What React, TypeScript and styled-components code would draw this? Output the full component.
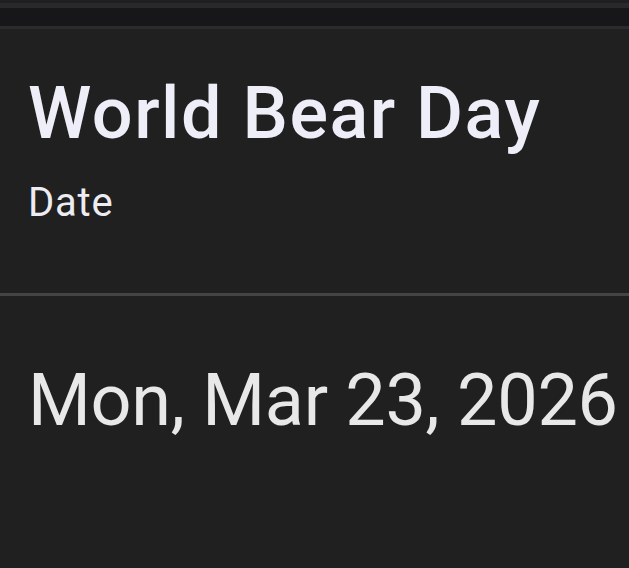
import { createGlobalStyle, styled } from "styled-components";

const GlobalStyle = createGlobalStyle`
  html, body {
    margin: 0;
    padding: 0;
    background: #202020;
  }
  body {
    font-family: Roboto, "Liberation Sans", sans-serif;
  }
`;

const Page = styled.div`
  width: 629px;
  height: 568px;
  overflow: hidden;
  background: #202020;
  display: flex;
  flex-direction: column;
`;

const TopStrip = styled.div`
  height: 3px;
  background: #1f1f21;
  border-bottom: 5px solid #29292b;
`;

const Toolbar = styled.div`
  height: 18px;
  background: #171719;
  border-bottom: 3px solid #2b2b2d;
`;

const Header = styled.header`
  height: 267px;
  box-sizing: border-box;
  padding: 49px 28px 0 28px;
  border-bottom: 3px solid #444446;
`;

const Title = styled.h1`
  margin: 0;
  font-size: 72px;
  font-weight: 500;
  line-height: 72px;
  letter-spacing: 1.5px;
  color: #eeeef8;
  white-space: nowrap;
`;

const Label = styled.div`
  margin-top: 33px;
  font-size: 40px;
  line-height: 40px;
  letter-spacing: 0.8px;
  color: #ececf2;
`;

const Body = styled.section`
  padding: 69px 28px 0 28px;
`;

const DateValue = styled.div`
  font-size: 72px;
  font-weight: 400;
  line-height: 72px;
  letter-spacing: -0.3px;
  color: #e8e8e8;
  white-space: nowrap;
`;

const App = (): JSX.Element => {
  return (
    <Page>
      <GlobalStyle />
      <TopStrip />
      <Toolbar />
      <Header>
        <Title>World Bear Day</Title>
        <Label>Date</Label>
      </Header>
      <Body>
        <DateValue>Mon, Mar 23, 2026</DateValue>
      </Body>
    </Page>
  );
};

export default App;
